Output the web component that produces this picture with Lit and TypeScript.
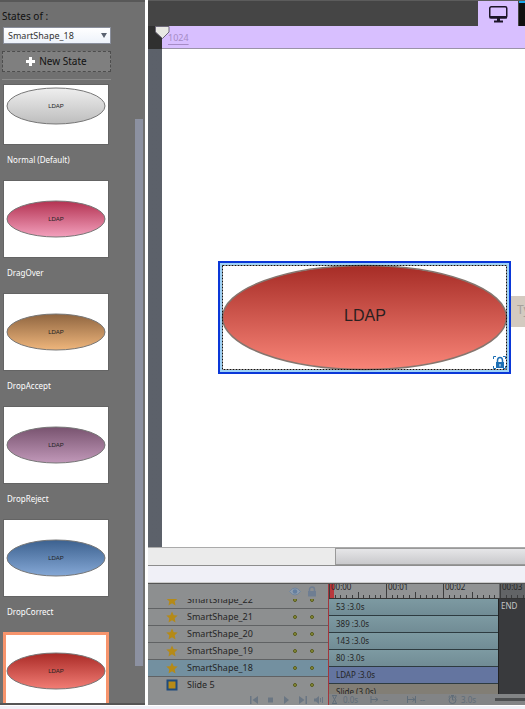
import { LitElement, html, css, svg } from "lit";
import { customElement, property } from "lit/decorators.js";
import { classMap } from "lit/directives/class-map.js";

const STATES = [
  { name: "Normal (Default)", top: "#efefef", bottom: "#bdbdbd", clipped: true },
  { name: "DragOver", top: "#b33251", bottom: "#f3a0bd" },
  { name: "DropAccept", top: "#8f6540", bottom: "#efb67c" },
  { name: "DropReject", top: "#78536f", bottom: "#c198b9" },
  { name: "DropCorrect", top: "#3c618f", bottom: "#85a8d6" },
  { name: "", top: "#a92a26", bottom: "#f27d75", selected: true },
];

const LAYERS = [
  { name: "SmartShape_22", cut: true },
  { name: "SmartShape_21" },
  { name: "SmartShape_20" },
  { name: "SmartShape_19" },
  { name: "SmartShape_18", selected: true },
  { name: "Slide 5", slide: true },
];

const BARS = ["53 :3.0s", "389 :3.0s", "143 :3.0s", "80 :3.0s"];

const star = html`<svg class="mark" viewBox="0 0 12 12" aria-hidden="true">
  <path d="M6 .5 7.7 4.2 11.7 4.6 8.7 7.3 9.5 11.4 6 9.3 2.5 11.4 3.3 7.3 .3 4.6 4.3 4.2Z" fill="#b58a17" />
</svg>`;

const slideMark = html`<svg class="mark" viewBox="0 0 12 12" aria-hidden="true">
  <rect x="1.500" y="1.500" width="9" height="9" fill="#b58a17" stroke="#1f4b7c" stroke-width="2" />
</svg>`;

@customElement("state-thumb")
export class StateThumb extends LitElement {
  @property() top = "";
  @property() bottom = "";

  static styles = css`
    :host { display: block; }
    .pic { display: block; width: 100%; height: 78px; }
    .word { font: 6px "Liberation Sans", Arial, sans-serif; fill: #222; }
  `;

  render() {
    return html`<svg class="pic" viewBox="0 0 106 78" aria-hidden="true">
      <defs>
        <linearGradient id="fill" x1="0" y1="0" x2="0" y2="1">
          <stop offset="0" stop-color=${this.top} />
          <stop offset="1" stop-color=${this.bottom} />
        </linearGradient>
      </defs>
      <ellipse cx="53" cy="39" rx="49" ry="18" fill="url(#fill)" stroke="#777" />
      <text class="word" x="53" y="41" text-anchor="middle">LDAP</text>
    </svg>`;
  }
}

@customElement("states-panel")
export class StatesPanel extends LitElement {
  static styles = css`
    :host {
      display: flex;
      flex-direction: column;
      min-height: 0;
      box-sizing: border-box;
      padding: 8px 2px 0;
      background: #707070;
      border-top: 2px solid #585858;
      border-bottom: 2px solid #555;
      font-family: "Noto Sans", "DejaVu Sans Condensed", sans-serif;
      font-size: 10px;
      color: #111;
    }
    .title { line-height: 13px; padding-bottom: 4px; }
    .picker { display: grid; width: 108px; margin-left: 1px; align-items: center; }
    .select {
      grid-area: 1 / 1;
      appearance: none;
      width: 100%;
      height: 17px;
      margin: 0;
      padding: 0 4px;
      border: 1px solid #8a8f9c;
      border-radius: 0;
      background: linear-gradient(#fff, #edf2fa);
      color: #333;
      font: 9px/15px "Noto Sans", sans-serif;
    }
    .arrow { grid-area: 1 / 1; justify-self: end; width: 6px; height: 5px; margin-right: 4px; pointer-events: none; }
    .new {
      display: flex;
      align-items: center;
      justify-content: center;
      gap: 4px;
      width: 109px;
      height: 21px;
      margin: 7px 0 7px;
      padding: 0;
      border: 1px dashed #4d4d4d;
      background: #7f7f7f;
      color: #111;
      font: 10px/13px "Noto Sans", sans-serif;
    }
    .plus { width: 9px; height: 9px; }
    .rule { width: 109px; height: 0; margin: 0 0 4px; border: 0; border-top: 1px solid #8b8b8b; }
    .body { display: grid; grid-template-columns: 107px 1fr; flex: 1; min-height: 0; }
    .list { list-style: none; margin: 0; padding: 0; overflow: hidden; contain: size; }
    .frame {
      display: flex;
      flex-direction: column;
      justify-content: flex-end;
      height: 78px;
      margin-left: 1px;
      overflow: hidden;
      background: #fff;
      outline: 1px solid #646464;
      outline-offset: -1px;
    }
    .frame.clipped { height: 61px; }
    .frame.selected { outline: 3px solid #f7946c; outline-offset: -3px; }
    .name { margin: 0; padding: 9px 5px 14px; color: #fff; font-size: 8px; line-height: 12px; }
    .track { display: flex; justify-content: flex-end; padding: 35px 0 37px; }
    .thumb { width: 8px; background: #8c91a1; }
  `;

  render() {
    return html`
      <label class="title" for="shape">States of :</label>
      <div class="picker">
        <select class="select" id="shape"><option>SmartShape_18</option></select>
        <svg class="arrow" viewBox="0 0 6 5" aria-hidden="true"><path d="M0 0H6L3 5Z" fill="#5b6270" /></svg>
      </div>
      <button class="new">
        <svg class="plus" viewBox="0 0 9 9" aria-hidden="true"><path d="M3 0H6V3H9V6H6V9H3V6H0V3H3Z" fill="#fff" /></svg>
        New State
      </button>
      <hr class="rule" />
      <div class="body">
        <ul class="list">
          ${STATES.map(
            (s) => html`<li>
              <div class=${classMap({ frame: true, clipped: !!s.clipped, selected: !!s.selected })}>
                <state-thumb top=${s.top} bottom=${s.bottom}></state-thumb>
              </div>
              ${s.name ? html`<p class="name">${s.name}</p>` : ""}
            </li>`
          )}
        </ul>
        <div class="track"><div class="thumb"></div></div>
      </div>
    `;
  }
}

@customElement("stage-area")
export class StageArea extends LitElement {
  static styles = css`
    :host { display: flex; flex-direction: column; min-height: 0; font-family: "Noto Sans", sans-serif; }
    .tabs {
      display: flex;
      justify-content: flex-end;
      height: 26px;
      box-sizing: border-box;
      border-top: 1px solid #5c5c5c;
      background: #454545;
    }
    .tab { display: flex; align-items: center; justify-content: center; width: 40px; padding: 0; border: 0; background: #d8bfff; }
    .screen { width: 20px; height: 18px; }
    .next { width: 6px; margin-left: 1px; padding: 0; border: 0; border-top: 2px solid #19a9ee; background: #101010; }
    .ruler { display: flex; height: 23px; background: #303030; }
    .scale { position: relative; flex: 1; margin-left: 14px; padding: 5px 6px 0; background: #d8bfff; border-bottom: 1px solid #9a93a8; }
    .size { display: block; color: #a58bc6; font-size: 9px; line-height: 13px; text-decoration: underline; text-underline-offset: 3px; }
    .marker { position: absolute; left: -7px; top: 0; width: 15px; height: 13px; }
    .work { display: flex; flex: 1; min-height: 0; background: linear-gradient(90deg, #5c616a, #5a5e66 90%, #4c4f55); }
    .canvas { position: relative; flex: 1; margin-left: 14px; overflow: hidden; background: #fff; }
    .caption {
      position: absolute;
      left: 339px;
      top: 247px;
      box-sizing: border-box;
      width: 90px;
      height: 31px;
      padding: 5px 16px;
      background: #d3cac0;
      color: #a5a09a;
      font-size: 12px;
      line-height: 17px;
      white-space: nowrap;
    }
    .object { position: absolute; left: 56px; top: 212px; width: 293px; height: 113px; }
    .word { font: 16px "Liberation Sans", Arial, sans-serif; fill: #2a2020; }
  `;

  render() {
    return html`
      <div class="tabs">
        <button class="tab" aria-label="Desktop view">
          <svg class="screen" viewBox="0 0 20 18" aria-hidden="true">
            <rect x="1.750" y="1.750" width="17" height="11" rx="1.500" fill="none" stroke="#1c1528" stroke-width="1.500" />
            <path d="M1.500 11H19V13.500H1.500ZM9 13H12V15.500H15V17.500H6V15.500H9Z" fill="#1c1528" />
          </svg>
        </button>
        <button class="next" aria-label="Next view"></button>
      </div>
      <div class="ruler">
        <div class="scale">
          <svg class="marker" viewBox="0 0 15 13" aria-hidden="true">
            <path d="M.5 .5H14V6L7.500 12.500 .5 6Z" fill="#e9e9e4" stroke="#6d6878" />
          </svg>
          <span class="size">1024</span>
        </div>
      </div>
      <div class="work">
        <div class="canvas">
          <div class="caption">Type</div>
          <svg class="object" viewBox="0 0 293 113" role="img" aria-label="LDAP shape">
            <defs>
              <linearGradient id="red" x1="0" y1="0" x2="0" y2="1">
                <stop offset="0" stop-color="#a62c26" />
                <stop offset="1" stop-color="#f98578" />
              </linearGradient>
            </defs>
            <rect x="1" y="1" width="291" height="111" fill="#fff" stroke="#0a37d8" stroke-width="2" />
            <rect x="3" y="3" width="287" height="107" fill="none" stroke="#9fd2f6" stroke-width="2" />
            <ellipse cx="146.500" cy="56.500" rx="142" ry="52" fill="url(#red)" stroke="#85766f" stroke-width="1.500" />
            <rect x="4.500" y="4.500" width="284" height="104" fill="none" stroke="#111" stroke-dasharray="2 1" />
            <text class="word" x="147" y="60" text-anchor="middle">LDAP</text>
            <rect x="275" y="95" width="13" height="13" fill="#fff" />
            <path d="M275.500 98V95.500H278M285 95.500H287.500V98M275.500 105V107.500H278M285 107.500H287.500V105" fill="none" stroke="#1d6fb4" />
            <path d="M279.500 101V99.500A2 2.500 0 0 1 284.500 99.500V101" fill="none" stroke="#1d6fb4" stroke-width="1.500" />
            <path d="M278 101H286V107H278ZM281.500 103V105.500H282.500V103Z" fill="#1d6fb4" fill-rule="evenodd" />
          </svg>
        </div>
      </div>
    `;
  }
}

@customElement("time-line")
export class TimeLine extends LitElement {
  static styles = css`
    :host {
      display: grid;
      grid-template-columns: 180px 1fr;
      height: 122px;
      box-sizing: border-box;
      overflow: hidden;
      border-top: 1px solid #555;
      background: #8d8f90;
      font-family: "Noto Sans", sans-serif;
      font-size: 9px;
      color: #252525;
    }
    .side, .main { display: flex; flex-direction: column; min-width: 0; }
    .head, .row { display: grid; grid-template-columns: 18px 21px 1fr 17px 17px 8px; align-items: center; }
    .head { height: 15px; }
    .head .eye { grid-column: 4; }
    .glyph { width: 12px; height: 11px; justify-self: center; }
    .row { height: 16px; grid-template-rows: 16px; border-bottom: 1px solid #606264; line-height: 16px; }
    .row .mark { grid-column: 2; }
    .row.selected { background: #7390a0; }
    .row.last { border-color: transparent; }
    .row.cut { height: 9px; align-content: end; overflow: hidden; }
    .mark { width: 12px; height: 12px; }
    .dot { justify-self: center; width: 4px; height: 4px; box-sizing: border-box; border: 1px solid #55591c; border-radius: 50%; background: #8e923a; }
    .play { display: flex; justify-content: flex-end; gap: 4px; flex: 1; padding-right: 4px; }
    .key { display: flex; align-items: center; justify-content: center; width: 12px; padding: 0; border: 0; background: none; }
    .key svg { width: 9px; height: 8px; }
    .main { border-left: 1px solid #a3353b; background: #393a3d; overflow: hidden; }
    .ruler { display: block; width: 230px; height: 15px; }
    .stamp { font: 8px "Noto Sans", sans-serif; fill: #252525; }
    .tracks { display: flex; flex: 1; min-height: 0; }
    .bars { width: 169px; height: 95px; overflow: hidden; border-right: 1px solid #222; }
    .bar {
      height: 16px;
      padding-left: 7px;
      border-bottom: 1px solid #2e3b40;
      background: linear-gradient(#7d9aa2, #718c95);
      font-size: 8px;
      line-height: 16px;
    }
    .bar.active { background: #6475a0; }
    .bar.slide { background: #827e75; }
    .end { padding: 0 2px; font-size: 8px; line-height: 13px; color: #c5c5c5; }
    .foot { display: flex; align-items: center; height: 11px; overflow: hidden; background: #828486; color: #606d79; font-size: 8px; line-height: 11px; }
    .cell { display: flex; align-items: center; gap: 4px; }
    .cell svg { width: 9px; height: 9px; }
    .wait { width: 40px; padding-left: 1px; }
    .from { width: 37px; }
    .span { width: 41px; }
    .total { width: 47px; }
    .slider { flex: 1; height: 3px; background: #4c4e50; }
  `;

  private key(label: string, d: string) {
    return html`<button class="key" aria-label=${label}>
      <svg viewBox="0 0 9 8" aria-hidden="true"><path d=${d} fill="#6a7683" /></svg>
    </button>`;
  }

  render() {
    const ticks = Array.from({ length: 40 }, (_, i) => i);
    return html`
      <div class="side">
        <div class="head">
          <svg class="glyph eye" viewBox="0 0 12 11" aria-hidden="true">
            <path d="M.5 5.500Q6-1.500 11.500 5.500 6 12.500 .5 5.500Z" fill="#8f9dae" stroke="#7086a0" />
            <circle cx="6" cy="5.500" r="2.300" fill="#647fa0" />
          </svg>
          <svg class="glyph" viewBox="0 0 12 11" aria-hidden="true">
            <path d="M3.500 5V3.500A2.500 2.500 0 0 1 8.500 3.500V5" fill="none" stroke="#6f7e92" stroke-width="1.500" />
            <path d="M2 5H10V10.500H2Z" fill="#6f7e92" />
          </svg>
        </div>
        ${LAYERS.map(
          (l) => html`<div class=${classMap({ row: true, cut: !!l.cut, selected: !!l.selected, last: !!l.slide })}>
            ${l.slide ? slideMark : star}<span>${l.name}</span><i class="dot"></i><i class="dot"></i>
          </div>`
        )}
        <div class="play">
          ${this.key("Rewind", "M0 0H1.500V8H0ZM8 0V8L2.500 4Z")}
          ${this.key("Stop", "M2 1.500H7V6.500H2Z")}
          ${this.key("Play", "M2 0V8L7 4Z")}
          ${this.key("Forward", "M1 0V8L6.500 4ZM7.500 0H9V8H7.500Z")}
          ${this.key("Sound", "M0 2.500H2L5 0V8L2 5.500H0ZM6 2H7V6H6ZM8 1H9V7H8Z")}
        </div>
      </div>
      <div class="main">
        <svg class="ruler" viewBox="0 0 230 15" aria-hidden="true">
          <rect width="170" height="15" fill="#919394" />
          <rect x="170" width="60" height="15" fill="#626466" />
          <rect width="5" height="14" fill="#b9383d" />
          ${ticks.map((i) => {
            const x = Math.round((i * 57) / 10) + 0.5;
            const y = i % 10 === 0 ? 0 : i % 5 === 0 ? 8 : 11;
            return svg`<path d="M${x} ${y}V14" stroke="#3c3d3e" />`;
          })}
          ${["00:00", "00:01", "00:02", "00:03"].map((t, i) => svg`<text class="stamp" x=${i * 57 + 2} y="6">${t}</text>`)}
          <path d="M0 14.500H230" stroke="#333" />
        </svg>
        <div class="tracks">
          <div class="bars">
            ${BARS.map((b) => html`<div class="bar">${b}</div>`)}
            <div class="bar active">LDAP :3.0s</div>
            <div class="bar slide">Slide (3.0s)</div>
          </div>
          <div class="end">END</div>
        </div>
        <div class="foot">
          <div class="cell wait">
            <svg viewBox="0 0 9 9" aria-hidden="true"><path d="M2 .5H7M2 8.500H7M2.500 .5 6.500 8.500M6.500 .5 2.500 8.500" fill="none" stroke="#606d79" /></svg>0.0s
          </div>
          <div class="cell from">
            <svg viewBox="0 0 9 9" aria-hidden="true"><path d="M1 1V8M1 4.500H8M5.500 2.500 8 4.500 5.500 6.500" fill="none" stroke="#606d79" /></svg>--
          </div>
          <div class="cell span">
            <svg viewBox="0 0 9 9" aria-hidden="true"><path d="M.5 1V8M8.500 1V8M1 4.500H8M5.500 2.500 8 4.500 5.500 6.500" fill="none" stroke="#606d79" /></svg>--
          </div>
          <div class="cell total">
            <svg viewBox="0 0 9 9" aria-hidden="true"><path d="M3 .5H6M4.500 .5V5H6.500M.5 2 2 .8M8.500 2 7 .8" fill="none" stroke="#606d79" /><circle cx="4.500" cy="5" r="3.500" fill="none" stroke="#606d79" /></svg>3.0s
          </div>
          <div class="slider"></div>
        </div>
      </div>
    `;
  }
}

@customElement("app-root")
export class AppRoot extends LitElement {
  static styles = css`
    :host {
      display: grid;
      grid-template-columns: 145px 1fr;
      grid-template-rows: 1fr 4px;
      column-gap: 3px;
      height: 100vh;
      overflow: hidden;
      background: #fff;
    }
    .editor { display: flex; flex-direction: column; min-width: 0; min-height: 0; }
    .stage { flex: 1; }
    .scroll { height: 17px; background: #ebebeb; border-top: 1px solid #aaa; border-bottom: 1px solid #8d8d8d; }
    .grip { height: 15px; margin-left: 187px; border: 1px solid #999; border-right: 0; background: linear-gradient(#e6e6e8, #c9c9cc); }
    .gap { height: 16px; background: #f0f0f7; border-bottom: 1px solid #ccc; }
    .status { grid-column: 1 / -1; background: #f0f0f7; border-top: 1px solid #fff; }
  `;

  render() {
    return html`
      <states-panel></states-panel>
      <main class="editor">
        <stage-area class="stage"></stage-area>
        <div class="scroll"><div class="grip"></div></div>
        <div class="gap"></div>
        <time-line></time-line>
      </main>
      <div class="status"></div>
    `;
  }
}
